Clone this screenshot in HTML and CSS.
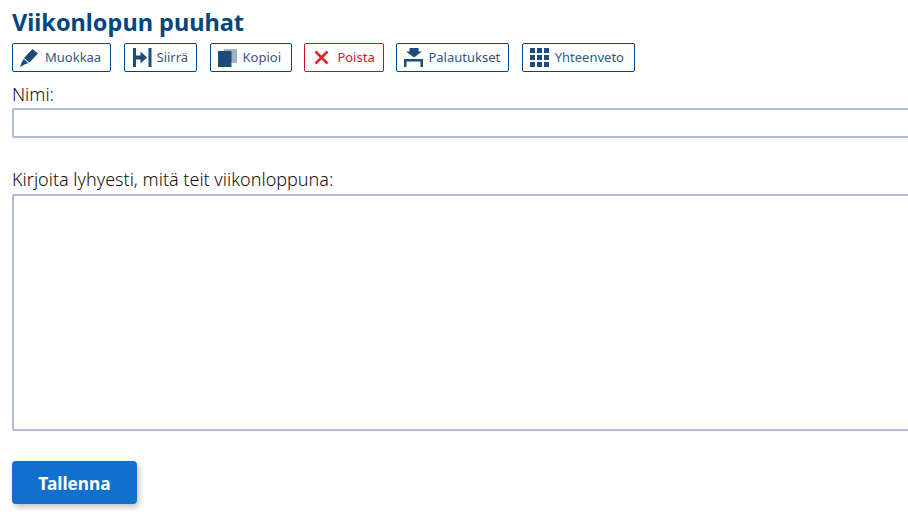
FILE: index.html
```html
<!DOCTYPE html>
<html lang="fi">
<head>
    <meta charset="UTF-8">
    <meta name="viewport" content="width=device-width, initial-scale=1.0">
    <title>Viikonlopun puuhat</title>
    <link rel="stylesheet" href="styles.css">
</head>
<body>
    <h1>Viikonlopun puuhat</h1>

    <div class="toolbar">
        <a class="tool tool-edit">
            <svg width="19" height="19" viewBox="0 0 19 19"><path d="M12.500 1l5.500 4.500-8.500 9-5.500-4.500z M3.600 11l4.900 4-3.500 1.200L0 19l1.700-4.800z" fill="#1f4a7c"/></svg>
            <span class="tool-text">Muokkaa</span>
        </a>
        <a class="tool tool-move">
            <svg width="19" height="19" viewBox="0 0 19 19"><path d="M0 0h3v19H0zM15.500 0h3v19h-3zM3 7.500h4.500V3.500l6.500 6-6.500 6v-4H3z" fill="#1f4a7c"/></svg>
            <span class="tool-text">Siirrä</span>
        </a>
        <a class="tool tool-copy">
            <svg width="19" height="18" viewBox="0 0 19 18"><path d="M6 0h13v14H6z" fill="#9fb0c6"/><path d="M0 2h13.500v16H0z" fill="#1f4a7c"/></svg>
            <span class="tool-text">Kopioi</span>
        </a>
        <a class="tool tool-delete">
            <svg width="15" height="15" viewBox="0 0 15 15"><path d="M1.500 1.500l12 12M13.500 1.500l-12 12" stroke="#d9262c" stroke-width="2.600" fill="none"/></svg>
            <span class="tool-text">Poista</span>
        </a>
        <a class="tool tool-returns">
            <svg width="19" height="19" viewBox="0 0 19 19"><path d="M5.500 0h9v3.500H18L10 9.500 2 3.500h3.500z" fill="#1f4a7c"/><path d="M0 19v-8h19v8h-2.500v-5.500h-14V19z" fill="#1f4a7c"/></svg>
            <span class="tool-text">Palautukset</span>
        </a>
        <a class="tool tool-summary">
            <svg width="19" height="19" viewBox="0 0 19 19" fill="#1f4a7c"><path d="M0 0h5v5H0zM7 0h5v5H7zM14 0h5v5h-5zM0 7h5v5H0zM7 7h5v5H7zM14 7h5v5h-5zM0 14h5v5H0zM7 14h5v5H7zM14 14h5v5h-5z"/></svg>
            <span class="tool-text">Yhteenveto</span>
        </a>
    </div>

    <form>
        <label class="field-label" for="name">Nimi:</label>
        <input class="field-input" id="name" type="text">

        <label class="field-label field-label-long" for="story">Kirjoita lyhyesti, mitä teit viikonloppuna:</label>
        <textarea class="field-area" id="story"></textarea>

        <button class="save-btn" type="button">Tallenna</button>
    </form>
</body>
</html>
```

FILE: styles.css
```css
html, body {
    overflow: hidden;
}
body {
    margin: 0;
    padding: 7px 0 0 12px;
    height: 511px;
    box-sizing: border-box;
    font-family: "Noto Sans", "Open Sans", sans-serif;
    background: white;
    color: #111;
}
h1 {
    margin: 0 0 6px;
    font-size: 23.500px;
    line-height: 30px;
    font-weight: 700;
    color: #004680;
}
.toolbar {
    display: flex;
    gap: 12.500px;
    margin-bottom: 11px;
}
.tool {
    display: flex;
    align-items: center;
    gap: 6px;
    height: 29px;
    box-sizing: border-box;
    border: 1px solid #004680;
    border-radius: 2px;
    font-size: 13px;
    color: #35557f;
}
.tool svg {
    flex-shrink: 0;
}
.tool-text {
    position: relative;
    top: -1px;
}
.tool-edit { width: 99px; padding-left: 7px; }
.tool-move { width: 73.500px; padding-left: 8px; gap: 5px; }
.tool-copy { width: 82.400px; padding-left: 7px; }
.tool-delete {
    width: 79.500px;
    padding-left: 9px;
    gap: 8px;
    border-color: #c8101a;
    color: #c8202a;
}
.tool-returns { width: 112.800px; padding-left: 7px; gap: 5px; }
.tool-summary { width: 113.300px; padding-left: 7px; }
.field-label {
    display: block;
    font-size: 18px;
    font-weight: 350;
    line-height: 22px;
    margin-bottom: 3px;
}
.field-label-long {
    margin-top: 30px;
    margin-bottom: 4px;
}
.field-input, .field-area {
    display: block;
    width: 1000px;
    box-sizing: border-box;
    border: 2px solid #b0bdd0;
    border-radius: 2px;
    background: white;
    padding: 4px 8px;
    margin: 0;
}
.field-input {
    height: 30px;
}
.field-area {
    height: 237px;
    resize: none;
}
.save-btn {
    display: block;
    margin-top: 30px;
    width: 125px;
    height: 43px;
    padding: 2px 0 0;
    border: none;
    border-radius: 4px;
    background: #136fce;
    color: white;
    font-family: inherit;
    font-size: 17.300px;
    font-weight: 700;
    box-shadow: 2px 3px 6px rgba(0,0,0,0.25);
}
```
